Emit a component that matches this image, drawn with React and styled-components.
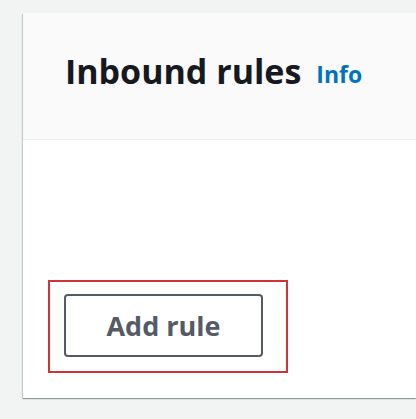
import styled, { createGlobalStyle } from "styled-components";

const GlobalStyle = createGlobalStyle`
    html, body {
        margin: 0;
        padding: 0;
        background: #f2f3f3;
        overflow: hidden;
    }

    body {
        font-family: "Open Sans", "Noto Sans", sans-serif;
    }
`;

const Page = styled.div`
    padding: 13px 0 0 23px;
    height: 419px;
    box-sizing: border-box;
`;

const Card = styled.section`
    width: 393px;
    height: 385px;
    display: flex;
    flex-direction: column;
    background: #ffffff;
    box-shadow: 0 1px 1px 0 rgba(0, 28, 36, 0.3), -1px 1px 1px 0 rgba(0, 28, 36, 0.15);
`;

const Header = styled.header`
    height: 127px;
    box-sizing: border-box;
    padding: 41px 0 0 42px;
    display: flex;
    align-items: baseline;
    background: #fafafa;
    border-bottom: 1px solid #eaeded;

    h2 {
        margin: 0;
        font-size: 34px;
        line-height: 34px;
        font-weight: 700;
        color: #16191f;
    }

    a {
        margin-left: 15px;
        font-size: 23px;
        font-weight: 700;
        color: #0073bb;
        text-decoration: none;
        position: relative;
        top: -1px;
    }
`;

const Body = styled.div`
    flex: 1;
    display: flex;
    flex-direction: column;
    justify-content: flex-end;
    padding: 0 0 25px 25px;
`;

const Highlight = styled.div`
    align-self: flex-start;
    width: 240px;
    height: 93px;
    box-sizing: border-box;
    border: 2px solid #d13239;
    padding: 12px 0 0 14px;
`;

const Button = styled.button`
    width: 199px;
    height: 63px;
    box-sizing: border-box;
    border: 2px solid #545b64;
    border-radius: 4px;
    background: #ffffff;
    color: #545b64;
    font-family: inherit;
    font-size: 27px;
    font-weight: 700;
    cursor: pointer;
`;

const App = () => (
    <>
        <GlobalStyle />
        <Page>
            <Card>
                <Header>
                    <h2>Inbound rules</h2>
                    <a href="#info">Info</a>
                </Header>
                <Body>
                    <Highlight>
                        <Button>Add rule</Button>
                    </Highlight>
                </Body>
            </Card>
        </Page>
    </>
);

export default App;
